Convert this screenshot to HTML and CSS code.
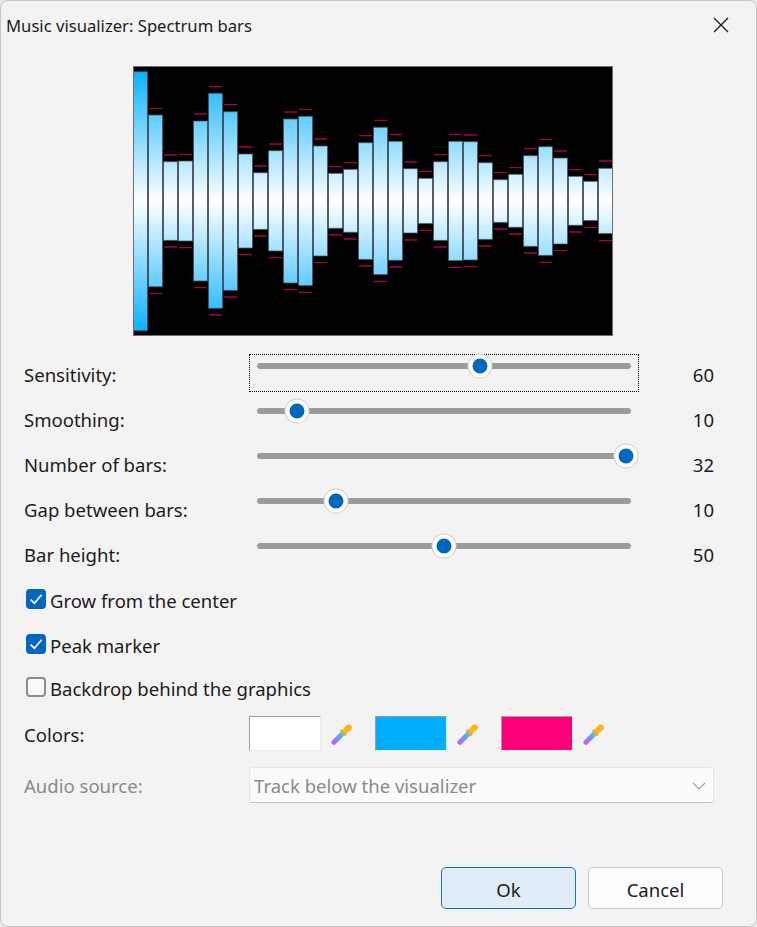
FILE: index.html
```html
<!DOCTYPE html>
<html lang="en">
<head>
<meta charset="utf-8">
<title>Music visualizer: Spectrum bars</title>
<link rel="stylesheet" href="styles.css">
</head>
<body>
<svg class="defs" width="0" height="0" aria-hidden="true">
  <defs>
    <linearGradient id="dropper" gradientUnits="userSpaceOnUse" x1="3" y1="21" x2="13" y2="10">
      <stop offset="0" stop-color="#c95ff0"/>
      <stop offset="0.6" stop-color="#55aaf8"/>
      <stop offset="1" stop-color="#45c8e8"/>
    </linearGradient>
    <symbol id="eyedrop" viewBox="0 0 24 24">
      <path d="M3.2 21 L13 11.2" stroke="url(#dropper)" stroke-width="5.4" stroke-linecap="round" fill="none"/>
      <path d="M9.6 8.6 L15.4 14.4 L17.4 12.4 L11.6 6.6 Z" fill="#f2a91c"/>
      <path d="M12.6 7.4 L16.6 2.6 C18.2 1.2 20.8 1.4 22 2.6 C23.2 3.8 23.2 6 21.8 7.6 L16.6 11.4 Z" fill="#fbb419"/>
    </symbol>
  </defs>
</svg>
<main class="dialog">
  <header class="titlebar">
    <h1 class="title">Music visualizer: Spectrum bars</h1>
    <svg class="close" viewBox="0 0 16 16" width="16" height="16"><path d="M1 1 L15 15 M15 1 L1 15"/></svg>
  </header>

  <svg class="viz" viewBox="0 0 480 270" width="480" height="270">
    <defs>
      <linearGradient id="bar" gradientUnits="userSpaceOnUse" x1="0" y1="0" x2="0" y2="270">
        <stop offset="0" stop-color="#00aeff"/>
        <stop offset="0.5" stop-color="#ffffff"/>
        <stop offset="1" stop-color="#00aeff"/>
      </linearGradient>
    </defs>
    <rect class="viz-bg" width="480" height="270"/>
    <g class="bars">
      <rect x="0.5" y="5.7" width="14" height="259"/>
      <rect x="15.5" y="49" width="14" height="171.7"/>
      <rect x="30.5" y="95.7" width="14" height="78.7"/>
      <rect x="45.5" y="95" width="14" height="80"/>
      <rect x="60.5" y="55" width="14" height="160"/>
      <rect x="75.5" y="27.3" width="14" height="215"/>
      <rect x="90.5" y="45.7" width="14" height="178.7"/>
      <rect x="105.5" y="88" width="14" height="94"/>
      <rect x="120.5" y="106.7" width="14" height="56.7"/>
      <rect x="135.5" y="84.7" width="14" height="100.3"/>
      <rect x="150.5" y="53" width="14" height="164"/>
      <rect x="165.5" y="50.3" width="14" height="169.3"/>
      <rect x="180.5" y="80" width="14" height="110"/>
      <rect x="195.5" y="107.3" width="14" height="55"/>
      <rect x="210.5" y="103.3" width="14" height="63"/>
      <rect x="225.5" y="76.7" width="14" height="116.7"/>
      <rect x="240.5" y="61.3" width="14" height="147.3"/>
      <rect x="255.5" y="75.3" width="14" height="119"/>
      <rect x="270.5" y="102.7" width="14" height="64.3"/>
      <rect x="285.5" y="112.3" width="14" height="45.3"/>
      <rect x="300.5" y="95.7" width="14" height="78.7"/>
      <rect x="315.5" y="75.3" width="14" height="119.3"/>
      <rect x="330.5" y="75.7" width="14" height="118.3"/>
      <rect x="345.5" y="96.7" width="14" height="76.7"/>
      <rect x="360.5" y="113.7" width="14" height="42.7"/>
      <rect x="375.5" y="108.3" width="14" height="53"/>
      <rect x="390.5" y="89.7" width="14" height="90.7"/>
      <rect x="405.5" y="80.7" width="14" height="108.7"/>
      <rect x="420.5" y="92" width="14" height="86"/>
      <rect x="435.5" y="110.3" width="14" height="49"/>
      <rect x="450.5" y="115.3" width="14" height="39.3"/>
      <rect x="465.5" y="102.3" width="14" height="65.3"/>
    </g>
    <path class="peaks" d="M16 42.3h13M16 227.3h13M31 89h13M31 181h13M46 88.3h13M46 181.7h13M61 48h13M61 221.7h13M76 20.7h13M76 249h13M91 38.7h13M91 231h13M106 81h13M106 188.7h13M121 100h13M121 170h13M136 78h13M136 191.7h13M151 46h13M151 223.7h13M166 43.3h13M166 226.3h13M181 73h13M181 196.7h13M196 100.7h13M196 169h13M211 96.7h13M211 173h13M226 69.7h13M226 200h13M241 54.3h13M241 215.3h13M256 68.7h13M256 201h13M271 96h13M271 174h13M286 105.3h13M286 164.3h13M301 88.7h13M301 181h13M316 68.3h13M316 201.3h13M331 69h13M331 200.7h13M346 89.7h13M346 180h13M361 106.7h13M361 163h13M376 101.7h13M376 168h13M391 82.7h13M391 187h13M406 73.3h13M406 196.3h13M421 85h13M421 184.7h13M436 103.7h13M436 166h13M451 108.7h13M451 161.3h13M466 95h13M466 174.7h13"/>
    <rect class="viz-frame" x="0.5" y="0.5" width="479" height="269"/>
  </svg>

  <section class="form">
    <div class="row slider-row">
      <span class="label">Sensitivity:</span>
      <div class="slider focused"><div class="track"><span class="thumb" style="left:59.6%"></span></div></div>
      <span class="value">60</span>
    </div>
    <div class="row slider-row">
      <span class="label">Smoothing:</span>
      <div class="slider"><div class="track"><span class="thumb" style="left:10.8%"></span></div></div>
      <span class="value">10</span>
    </div>
    <div class="row slider-row">
      <span class="label">Number of bars:</span>
      <div class="slider"><div class="track"><span class="thumb" style="left:98.7%"></span></div></div>
      <span class="value">32</span>
    </div>
    <div class="row slider-row">
      <span class="label">Gap between bars:</span>
      <div class="slider"><div class="track"><span class="thumb" style="left:21.1%"></span></div></div>
      <span class="value">10</span>
    </div>
    <div class="row slider-row">
      <span class="label">Bar height:</span>
      <div class="slider"><div class="track"><span class="thumb" style="left:50%"></span></div></div>
      <span class="value">50</span>
    </div>

    <div class="check check-a">
      <span class="box on"><svg viewBox="0 0 20 20" width="20" height="20"><path d="M4.6 10.6 L8.4 14.2 L15.6 5.8"/></svg></span>
      <span class="check-text">Grow from the center</span>
    </div>
    <div class="check check-b">
      <span class="box on"><svg viewBox="0 0 20 20" width="20" height="20"><path d="M4.6 10.6 L8.4 14.2 L15.6 5.8"/></svg></span>
      <span class="check-text">Peak marker</span>
    </div>
    <div class="check check-c">
      <span class="box"></span>
      <span class="check-text">Backdrop behind the graphics</span>
    </div>

    <div class="row colors-row">
      <span class="label">Colors:</span>
      <div class="colors">
        <div class="pick"><span class="swatch white"></span><svg class="drop" width="22" height="22"><use href="#eyedrop"/></svg></div>
        <div class="pick"><span class="swatch blue"></span><svg class="drop" width="22" height="22"><use href="#eyedrop"/></svg></div>
        <div class="pick"><span class="swatch pink"></span><svg class="drop" width="22" height="22"><use href="#eyedrop"/></svg></div>
      </div>
    </div>

    <div class="row source-row">
      <span class="label disabled">Audio source:</span>
      <div class="select">
        <span>Track below the visualizer</span>
        <svg viewBox="0 0 14 8" width="14" height="8"><path d="M1 1 L7 7 L13 1"/></svg>
      </div>
    </div>
  </section>

  <footer class="actions">
    <button class="btn primary" type="button">Ok</button>
    <button class="btn" type="button">Cancel</button>
  </footer>
</main>
</body>
</html>
```
FILE: styles.css
```css
* { box-sizing: border-box; }
html, body { margin: 0; padding: 0; background: #e9e9e9; }
body {
  width: 757px;
  height: 927px;
  overflow: hidden;
  font-family: "Noto Sans", "Open Sans", sans-serif;
  font-size: 18.55px;
  color: #1b1b1b;
}
.defs { position: absolute; }
.dialog {
  width: 757px;
  height: 927px;
  display: flex;
  flex-direction: column;
  background: #f3f3f3;
  border: 1px solid #c4c4c4;
  border-radius: 8px;
}
.titlebar {
  height: 51px;
  flex: none;
  display: flex;
  justify-content: space-between;
  align-items: flex-start;
  padding: 16px 27px 0 5px;
}
.title {
  margin: 0;
  font-size: 16.65px;
  font-weight: 400;
  line-height: 18px;
}
.close { fill: none; stroke: #1b1b1b; stroke-width: 1.3; }
.viz { display: block; flex: none; margin: 14px 0 0 132px; }
.viz-bg { fill: #000; }
.viz-frame { fill: none; stroke: #6e6e6e; }
.bars rect { fill: url(#bar); stroke: rgba(70, 80, 85, 0.7); stroke-width: 1; }
.peaks { fill: none; stroke: #a8004e; stroke-width: 1.3; }

.form { flex: none; margin-top: 18px; display: flex; flex-direction: column; }
.row {
  display: grid;
  grid-template-columns: 225px 390px 75px;
  padding-left: 23px;
  align-items: start;
}
.slider-row { height: 45px; }
.label { line-height: 42px; }
.label.disabled { color: #8a8a8a; }
.value { line-height: 42px; text-align: right; }
.slider { height: 38px; padding: 8px 7px 0; border: 1px solid transparent; }
.slider.focused { border: 1px dotted #000; }
.track { position: relative; height: 6px; background: #9b9b9b; border-radius: 3px; }
.thumb {
  position: absolute;
  top: 50%;
  width: 23px;
  height: 23px;
  transform: translate(-50%, -50%);
  background: #0067c0;
  border: 4px solid #fff;
  border-radius: 50%;
  box-shadow: 0 0 0 1px #cfcfcf;
}

.check { display: flex; align-items: flex-start; padding-left: 25px; }
.check-a { margin-top: 10px; height: 45px; }
.check-b { height: 43px; }
.check-c { height: 39px; }
.box {
  flex: none;
  width: 20px;
  height: 20px;
  border: 2px solid #8c8c8c;
  border-radius: 4px;
  background: #fbfbfb;
  position: relative;
}
.box.on { background: #0067c0; border-color: #0067c0; }
.box svg { position: absolute; left: -2px; top: -2px; fill: none; stroke: #fff; stroke-width: 1.7; }
.check-text { margin-left: 4px; line-height: 24px; }

.colors-row { height: 35px; }
.colors-row .label { line-height: 38px; }
.colors { display: flex; grid-column: 2 / 4; }
.pick { display: flex; align-items: center; width: 126px; }
.swatch {
  width: 72px;
  height: 35px;
  border-top: 1px solid #9e9e9e;
  border-left: 1px solid #9e9e9e;
  border-right: 1px solid #ececec;
  border-bottom: 1px solid #ececec;
}
.swatch.white { background: #fff; }
.swatch.blue { background: #00aeff; }
.swatch.pink { background: #ff0078; }
.drop { margin-left: 10px; }

.source-row { margin-top: 16px; grid-template-columns: 225px 465px; }
.source-row .label { line-height: 38px; }
.select {
  height: 36px;
  display: flex;
  align-items: center;
  justify-content: space-between;
  padding: 1px 7px 0 4px;
  color: #8a8a8a;
  background: #fbfbfb;
  border: 1px solid #e6e6e6;
  border-bottom-color: #c4c4c4;
  border-radius: 3px;
}
.select svg { fill: none; stroke: #a0a0a0; stroke-width: 1.2; }

.actions {
  margin-top: auto;
  flex: none;
  display: flex;
  justify-content: flex-end;
  gap: 12px;
  padding: 0 33px 17px 0;
}
.btn {
  width: 135px;
  height: 42px;
  font: inherit;
  color: #1b1b1b;
  background: #fdfdfd;
  border: 1px solid #c8c8c8;
  border-radius: 5px;
  padding: 3px 0 0;
}
.btn.primary { background: #e0ecf7; border-color: #1f74b8; }
```
